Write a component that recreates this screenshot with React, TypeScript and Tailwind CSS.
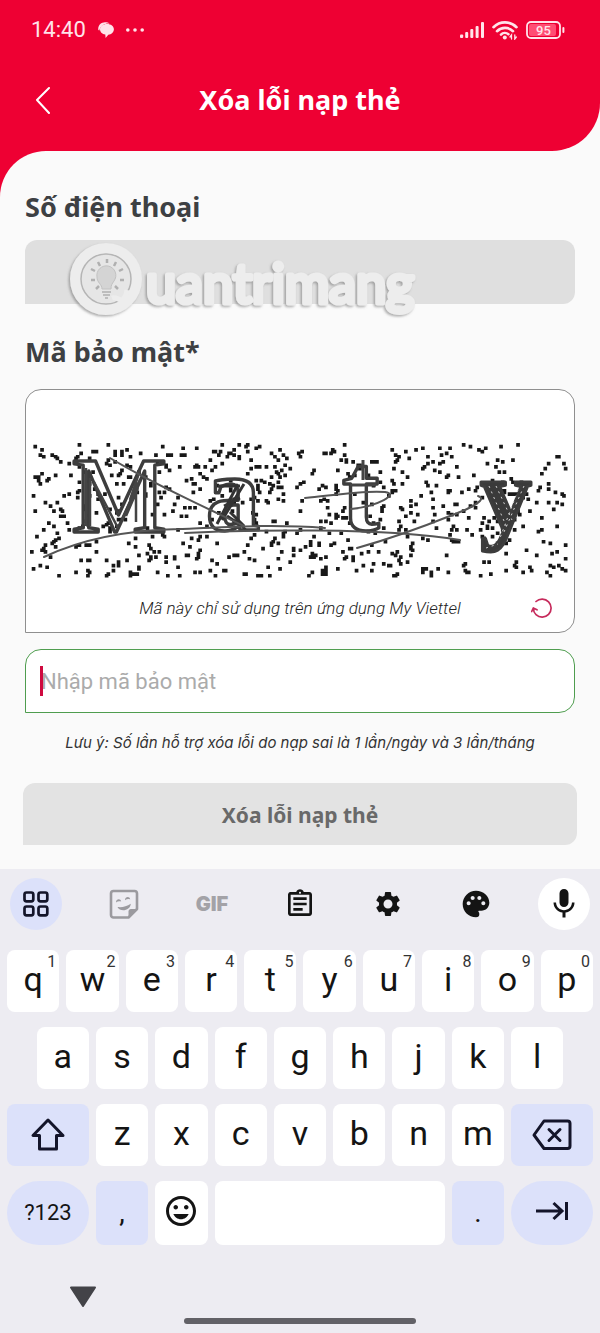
import type { ReactNode } from 'react'
import { MdMic, MdMood, MdOutlineAssignment, MdPalette, MdSettings } from 'react-icons/md'

const topKeys = ['q', 'w', 'e', 'r', 't', 'y', 'u', 'i', 'o', 'p']
const middleKeys = ['a', 's', 'd', 'f', 'g', 'h', 'j', 'k', 'l']
const bottomKeys = ['z', 'x', 'c', 'v', 'b', 'n', 'm']

// speckles of the captcha, same pattern on every render
function makeSpeckles(count: number) {
    let seed = 90217
    const next = () => {
        seed = (seed + 0x6d2b79f5) | 0
        let t = Math.imul(seed ^ (seed >>> 15), 1 | seed)
        t = (t + Math.imul(t ^ (t >>> 7), 61 | t)) ^ t
        return ((t ^ (t >>> 14)) >>> 0) / 4294967296
    }
    let d = ''
    for (let i = 0; i < count; i++) {
        const x = 30 + Math.floor(next() * 316) * 1.7
        const y = 443 + Math.floor(next() * 78) * 1.7
        d += `M${x.toFixed(1)} ${y.toFixed(1)}h3.7v3.7h-3.7z`
    }
    return d
}

const speckles = makeSpeckles(720)

function StatusBar() {
    return (
        <div className="flex h-[60px] items-center justify-between pr-[35px] pl-[31px] text-[#ffe3ea]">
            <div className="flex items-center">
                <span className="font-[Roboto] text-[22px] leading-6">14:40</span>
                <svg className="ml-3 h-4 w-4" viewBox="0 0 16 16" fill="currentColor">
                    <path d="M.3 8C-.4 3.500 3 .4 7 .3c2 0 3.600.3 4.700 1.200C7 1 2.400 3 1.400 8.500z" />
                    <path d="M9 2c4 0 6.900 2.200 6.900 5.300 0 3-2.600 5.200-5.600 5.400L7.600 16 7.300 12.600C4 12.200 2 9.800 2 7.300 2 4.200 5 2 9 2z" />
                </svg>
                <svg className="ml-3 h-1 w-[18px]" viewBox="0 0 18 4" fill="currentColor">
                    <circle cx="1.800" cy="2" r="1.800" />
                    <circle cx="9" cy="2" r="1.800" />
                    <circle cx="16.200" cy="2" r="1.800" />
                </svg>
            </div>
            <div className="flex items-center gap-2">
                <svg className="h-4 w-6" viewBox="0 0 24 16" fill="currentColor">
                    <rect x="0" y="12.500" width="3.200" height="3.500" rx="1" />
                    <rect x="5.200" y="10" width="3" height="6" rx="1" />
                    <rect x="10.300" y="7" width="3" height="9" rx="1" />
                    <rect x="15.600" y="4" width="3" height="12" rx="1" />
                    <rect x="21" y="0" width="3" height="16" rx="1" />
                </svg>
                <svg className="h-[19px] w-[26px]" viewBox="0 0 26 19" fill="none" stroke="currentColor" strokeWidth="2.600" strokeLinecap="round">
                    <path d="M1.500 6.200C8-.2 18-.2 24.500 6.200M5 10.200c4.500-4.400 11.500-4.400 16 0M9 13.600c2-2 5.200-2.200 7.400-.4" />
                    <circle cx="12.800" cy="16.500" r="2" fill="currentColor" stroke="none" />
                    <path d="M19.500 18v-4l-1.500 2M22.800 14v4l1.500-2" strokeWidth="1.300" />
                </svg>
                <svg className="h-[18px] w-[39px]" viewBox="0 0 39 18" fill="none">
                    <rect x="1" y="1" width="33" height="16" rx="4" stroke="currentColor" strokeWidth="1.800" />
                    <rect x="3" y="3" width="27" height="12" rx="2" fill="#ff4d73" />
                    <rect x="36.400" y="6" width="2" height="6" rx="1" fill="currentColor" />
                    <text x="17.500" y="13.500" textAnchor="middle" fill="currentColor" className="font-[Roboto] text-[13px] font-medium">95</text>
                </svg>
            </div>
        </div>
    )
}

function Header() {
    return (
        <header className="rounded-br-[48px] bg-[#ee0033]">
            <StatusBar />
            <div className="grid h-[91px] grid-cols-[48px_1fr_48px] items-center px-[19px] pb-3">
                <button type="button" aria-label="Quay lại" className="flex h-12 w-12 items-center justify-center text-white">
                    <svg className="h-7 w-4" viewBox="0 0 16 28" fill="none" stroke="currentColor" strokeWidth="2" strokeLinecap="round" strokeLinejoin="round">
                        <path d="M14 2 2 14l12 13" />
                    </svg>
                </button>
                <h1 className="text-center text-[27px] leading-8 font-bold text-white">Xóa lỗi nạp thẻ</h1>
            </div>
        </header>
    )
}

function Watermark() {
    return (
        <svg className="pointer-events-none absolute top-0 left-[43px] h-20 w-[352px] overflow-visible" viewBox="68 241 352 80" fill="none">
            <defs>
                <filter id="emboss" x="-10%" y="-10%" width="120%" height="130%">
                    <feDropShadow dx="-1.500" dy="1.500" stdDeviation="1" floodColor="#777" floodOpacity="0.600" />
                </filter>
            </defs>
            <g filter="url(#emboss)">
                <circle cx="106" cy="280" r="29.500" stroke="#ededed" strokeWidth="13" />
                <text x="146" y="304" fill="#ededed" stroke="#ededed" strokeWidth="5" strokeLinejoin="round" className="font-[Lato] text-[54px]">uantrimang</text>
            </g>
            <circle cx="106" cy="280" r="25" fill="#e6e6e6" stroke="#b5b5b5" strokeWidth="1.500" />
            <path d="M112 299c5-2 7 4 11 1s3-5 4-9" stroke="#ededed" strokeWidth="5" />
            <path d="M97 278a9.500 9.500 0 1 1 17 4c-2 3-3 4-3 8h-9c0-5-5-6-5-12z" fill="#d4d4d4" stroke="#c2c2c2" />
            <path d="M102 293h9M103 296h7M105 299h3" stroke="#bdbdbd" strokeWidth="2" />
            <path d="M107 260v4M98 263l2 4M116 263l-2 4M91 270l4 2M123 270l-4 2M91 281h4M120 281h4M96 290l3-3M118 290l-3-3" stroke="#b0b0b0" strokeWidth="2.500" />
        </svg>
    )
}

function CaptchaImage() {
    return (
        <svg className="mt-[50px] w-full overflow-visible" viewBox="26 440 548 140" fill="none" role="img" aria-label="Captcha">
            <path d={speckles} fill="#181818" />
            <g className="font-['Liberation_Serif']" stroke="#3d3d3d" strokeWidth="3.400" strokeLinejoin="round">
                <text x="71" y="532" fontSize="108">M</text>
                <text x="206" y="530" fontSize="108" fontWeight="bold">a</text>
                <text x="342" y="530" fontSize="112" fontWeight="bold">t</text>
                <text x="480" y="530" fontSize="104" fontWeight="bold" fill="#3a3a3a" strokeWidth="3">y</text>
            </g>
            <path d="M86 468v58M90 478v48M94 482l24 46M122 520l18-40M126 516l12-28M136 482v40M130 500l10-30" stroke="#444" strokeWidth="2.500" />
            <path d="M217 524 238 484M222 520l22-36M224 506l16-8M227 516l18 12M230 512l14 14M218 486l22 0" stroke="#333" strokeWidth="3" />
            <path d="M363 460v20M350 485h26" stroke="#444" strokeWidth="3" />
            <path d="m489 486 18 42M496 486l16 34M524 486l-20 46M518 490l-18 48M486 548l12-4" stroke="#d5d5d5" strokeWidth="1" strokeDasharray="2 4" />
            <g stroke="#555" strokeWidth="2" strokeLinecap="round">
                <path d="M44 557C84 538 130 530 180 529c45-2 95-5 145-1" />
                <path d="M185 533c60-3 200-6 275 7" />
                <path d="M110 458c40 24 84 44 134 68" />
                <path d="M305 498c30-3 60-8 80-6 14 2-6 14-34 17" />
                <path d="M357 548c50-14 80-27 108-38 17-8 19-12 13-14" />
            </g>
        </svg>
    )
}

function Form() {
    return (
        <main className="rounded-tl-[46px] bg-[#fafafa] px-[25px] pt-10 pb-6">
            <label htmlFor="phone" className="block text-[27px] leading-8 font-bold text-[#3d4043]">Số điện thoại</label>
            <div className="relative mt-[17px]">
                <input id="phone" type="tel" disabled className="block h-16 w-full rounded-t-xl rounded-br-xl bg-[#dfdfdf] px-4" />
                <Watermark />
            </div>
            <label htmlFor="code" className="mt-8 block text-[27px] leading-8 font-bold text-[#3d4043]">Mã bảo mật*</label>
            <div className="mt-[21px] h-[244px] rounded-t-2xl rounded-br-2xl border border-[#8f8f8f] bg-white">
                <CaptchaImage />
                <div className="mt-3 grid grid-cols-[48px_1fr_48px] items-center px-2">
                    <p className="col-start-2 text-center font-[Roboto] text-[17px] leading-8 font-light whitespace-nowrap text-[#222] italic">Mã này chỉ sử dụng trên ứng dụng My Viettel</p>
                    <button type="button" aria-label="Đổi mã" className="flex justify-center text-[#c62a5b]">
                        <svg className="h-[22px] w-[22px]" viewBox="0 0 22 22" fill="none" stroke="currentColor" strokeWidth="1.700" strokeLinecap="round" strokeLinejoin="round">
                            <path d="M5 4.500a9 9 0 1 1 0 13.200Q2.500 15.500 2.400 11.500M.7 14.500l1.600-3.500 3.700 1.800" />
                        </svg>
                    </button>
                </div>
            </div>
            <div className="relative mt-4">
                <input
                    id="code"
                    type="text"
                    placeholder="Nhập mã bảo mật"
                    className="block h-16 w-full rounded-t-2xl rounded-br-2xl border border-[#4f9d4f] bg-white px-[15px] font-[Roboto] text-[22px] outline-none placeholder:text-[#ababab]"
                />
                <span className="absolute top-[17px] left-[15px] h-[30px] w-[3px] bg-[#cf0a3f]" />
            </div>
            <p className="mt-[18px] text-center font-[Inter] text-[15px] leading-6 whitespace-nowrap text-[#333] italic">
                Lưu ý: Số lần hỗ trợ xóa lỗi do nạp sai là 1 lần/ngày và 3 lần/tháng
            </p>
            <button type="button" className="-mx-[2px] mt-7 flex h-[62px] w-[calc(100%+4px)] items-center justify-center rounded-t-xl rounded-br-xl bg-[#e3e3e3] pt-[3px] text-[21px] font-bold text-[#696969]">
                Xóa lỗi nạp thẻ
            </button>
        </main>
    )
}

function Tool({ label, className = '', children }: { label: string; className?: string; children: ReactNode }) {
    return (
        <button type="button" aria-label={label} className={`flex h-[52px] w-[52px] items-center justify-center rounded-full ${className}`}>
            {children}
        </button>
    )
}

function Key({ hint, className = 'col-span-2 rounded-lg bg-white', children }: { hint?: string; className?: string; children?: ReactNode }) {
    return (
        <button type="button" className={`relative flex items-center justify-center pb-1 text-[34px] leading-10 ${className}`}>
            {children}
            {hint && <span className="absolute top-1 right-[3px] text-base leading-4 text-[#333]">{hint}</span>}
        </button>
    )
}

function Keyboard() {
    return (
        <section className="bg-[#edecf2] pt-[9px] pb-[9px] font-[Roboto] text-[#141414]">
            <div className="flex items-center justify-between px-[10px]">
                <Tool label="Menu" className="bg-[#dce1fa]">
                    <svg className="h-[26px] w-[26px]" viewBox="0 0 26 26" fill="none" stroke="#14152a" strokeWidth="2.700">
                        <rect x="1.500" y="1.500" width="8.800" height="8.800" rx="2" />
                        <rect x="15.500" y="1.500" width="8.800" height="8.800" rx="2" />
                        <rect x="1.500" y="15.500" width="8.800" height="8.800" rx="2" />
                        <rect x="15.500" y="15.500" width="8.800" height="8.800" rx="2" />
                    </svg>
                </Tool>
                <Tool label="Nhãn dán" className="text-[#9b9a9f]">
                    <svg className="h-[30px] w-[30px]" viewBox="0 0 30 30" fill="none" stroke="currentColor" strokeWidth="2.600" strokeLinejoin="round">
                        <path d="M4.500 2h21A2.500 2.500 0 0 1 28 4.500V20l-8.500 8.500h-15A2.500 2.500 0 0 1 2 26V4.500A2.500 2.500 0 0 1 4.500 2z" />
                        <path d="M28 20h-6a2.500 2.500 0 0 0-2.500 2.500v6z" fill="currentColor" stroke="none" />
                        <path d="M8.500 18c4.500.6 9-.4 13.300-3.200C21.300 22 11 23.500 8.500 18z" fill="currentColor" stroke="none" />
                        <path d="M7 13.500c0-3.800 4.600-4.400 5.200-.9-1.800-.8-3.500-.5-5.200.9zM16 11.300c0-3.800 4.600-4.400 5.200-.9-1.800-.8-3.500-.5-5.200.9z" fill="currentColor" stroke="none" />
                    </svg>
                </Tool>
                <Tool label="GIF" className="font-[Inter] text-xl font-black text-[#a3a2a7]">GIF</Tool>
                <Tool label="Bảng nhớ tạm">
                    <MdOutlineAssignment size={32} />
                </Tool>
                <Tool label="Cài đặt">
                    <MdSettings size={30} />
                </Tool>
                <Tool label="Giao diện">
                    <MdPalette size={32} />
                </Tool>
                <Tool label="Nhập bằng giọng nói" className="bg-white">
                    <MdMic size={36} />
                </Tool>
            </div>

            <div className="mt-5 grid grid-cols-[repeat(20,minmax(0,1fr))] grid-rows-[62px_62px_62px_64px] gap-x-[7px] gap-y-[15px] px-[7px]">
                {topKeys.map((key, i) => (
                    <Key key={key} hint={String((i + 1) % 10)}>{key}</Key>
                ))}
                {middleKeys.map((key, i) => (
                    <Key key={key} className={i === 0 ? 'col-span-2 col-start-2 rounded-lg bg-white' : 'col-span-2 rounded-lg bg-white'}>{key}</Key>
                ))}
                <Key className="col-span-3 col-start-1 rounded-lg bg-[#dce1fa]">
                    <svg className="h-9 w-9" viewBox="0 0 36 36" fill="none" stroke="#14152a" strokeWidth="3" strokeLinejoin="round">
                        <path d="M18 5 3 20.500h6.500V34h17V20.500H33z" />
                    </svg>
                </Key>
                {bottomKeys.map((key) => (
                    <Key key={key}>{key}</Key>
                ))}
                <Key className="col-span-3 rounded-lg bg-[#dce1fa]">
                    <svg className="h-[34px] w-10" viewBox="0 0 40 34" fill="none" stroke="#14152a" strokeWidth="3" strokeLinejoin="round" strokeLinecap="round">
                        <path d="M12 5h23.500A2.500 2.500 0 0 1 38 7.500V30a2.500 2.500 0 0 1-2.500 2.500H12L2 19z" />
                        <path d="m17 13.500 11 11M28 13.500l-11 11" />
                    </svg>
                </Key>

                <Key className="col-span-3 rounded-[32px] bg-[#dce1fa]">
                    <span className="pt-1 text-[22px]">?123</span>
                </Key>
                <Key className="col-span-2 rounded-lg bg-[#dce1fa]">
                    <span className="pt-1 text-[28px]">,</span>
                </Key>
                <Key>
                    <MdMood size={36} />
                </Key>
                <Key className="col-span-8 rounded-lg bg-white" />
                <Key className="col-span-2 rounded-lg bg-[#dce1fa]">
                    <span className="pt-1 text-[28px]">.</span>
                </Key>
                <Key className="col-span-3 rounded-[32px] bg-[#dce1fa]">
                    <svg className="h-5 w-8" viewBox="0 0 32 20" fill="none" stroke="#14152a" strokeWidth="3">
                        <path d="M0 10h26M17.500 2l8.500 8-8.500 8M30.500 1v18" />
                    </svg>
                </Key>
            </div>

            <button type="button" aria-label="Ẩn bàn phím" className="mt-[41px] ml-[69px] block">
                <svg className="h-[22px] w-7" viewBox="0 0 28 22" fill="#434348" stroke="#434348" strokeWidth="2" strokeLinejoin="round">
                    <path d="M2 1.500h24L14 20z" />
                </svg>
            </button>
            <div className="mx-auto mt-[10px] h-[6px] w-[232px] rounded-full bg-[#626167]" />
        </section>
    )
}

export default function App() {
    return (
        <div className="bg-[#fafafa] font-['Noto_Sans',sans-serif]">
            <Header />
            <div className="bg-[linear-gradient(#ee0033_50%,#fafafa_50%)]">
                <Form />
            </div>
            <Keyboard />
        </div>
    )
}
